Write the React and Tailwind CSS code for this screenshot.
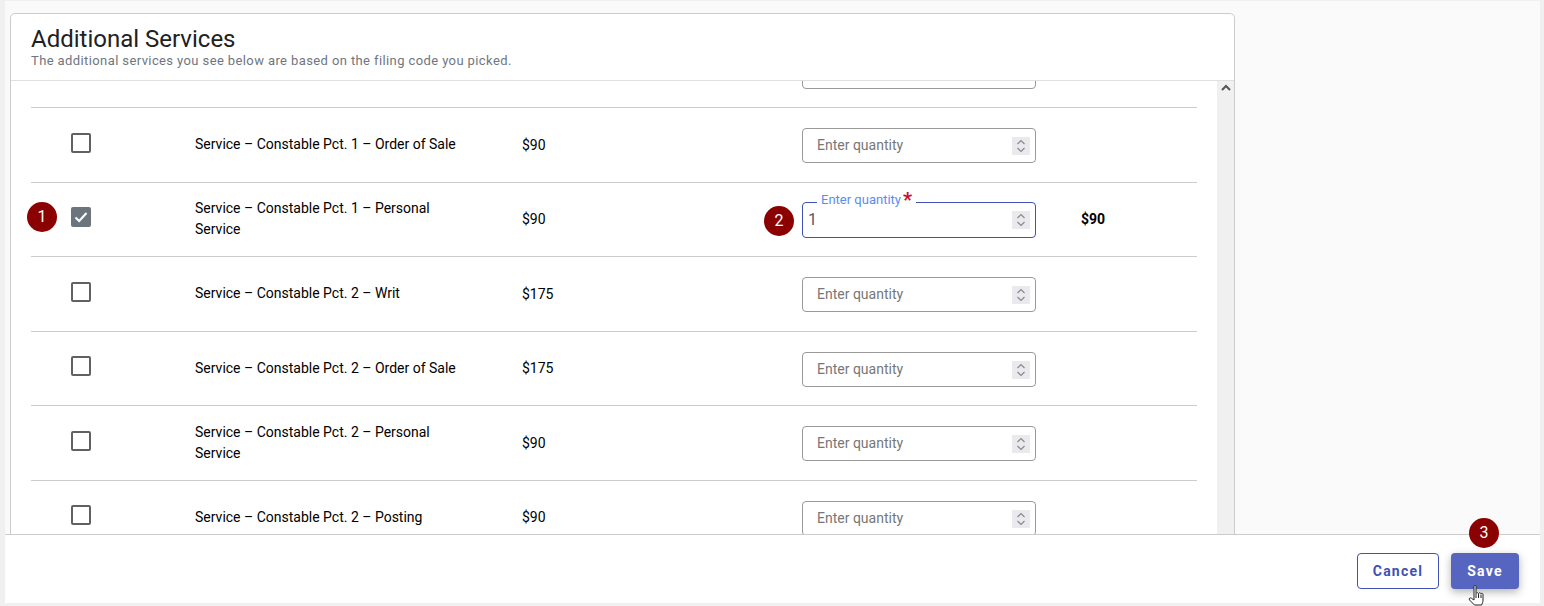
const services = [
  { name: "", price: "", clipped: true },
  { name: "Service – Constable Pct. 1 – Order of Sale", price: "$90" },
  { name: "Service – Constable Pct. 1 – Personal Service", price: "$90", active: true, total: "$90" },
  { name: "Service – Constable Pct. 2 – Writ", price: "$175" },
  { name: "Service – Constable Pct. 2 – Order of Sale", price: "$175" },
  { name: "Service – Constable Pct. 2 – Personal Service", price: "$90" },
  { name: "Service – Constable Pct. 2 – Posting", price: "$90" },
];

const Badge = ({ children, className }) => (
  <div
    className={`absolute w-[30px] h-[30px] rounded-full bg-[#8b0000] text-white text-[16px] flex items-center justify-center ${className}`}
  >
    {children}
  </div>
);

const Spinner = () => (
  <div className="absolute right-[5px] top-[8px] w-[18px] h-[18px] bg-[#e9e9ee] flex items-center justify-center">
    <svg width="12" height="16" viewBox="0 0 12 16" fill="none" stroke="#8a8a8a" strokeWidth="1.2">
      <path d="M2.5 6L6 2.5L9.5 6" />
      <path d="M2.5 10L6 13.5L9.5 10" />
    </svg>
  </div>
);

const QuantityInput = ({ active, clipped }) => {
  if (active) {
    return (
      <div className="relative w-[234px] h-[36px] rounded-[4px] border border-[#3f51b5] bg-white flex items-center pl-[5px] text-[16px] text-[#505b68]">
        <span className="absolute left-[14px] -top-[11px] bg-white px-[4px] text-[13px] leading-[16px] text-[#5b8def] flex">
          Enter quantity
          <span className="text-[#c8102e] text-[20px] font-bold leading-[16px] ml-[2px]">*</span>
        </span>
        1
        <Spinner />
      </div>
    );
  }
  return (
    <div className="relative w-[234px] h-[35px] rounded-[4px] border border-[#999] bg-white flex items-center pl-[14px] text-[14px] text-[#777]">
      {!clipped && "Enter quantity"}
      <Spinner />
    </div>
  );
};

const Checkbox = ({ checked }) =>
  checked ? (
    <div className="w-[20px] h-[20px] rounded-[2px] bg-[#6c757d] flex items-center justify-center">
      <svg width="14" height="14" viewBox="0 0 14 14" fill="none" stroke="#fff" strokeWidth="2">
        <path d="M1.5 7.5L5.2 11L12.5 3" />
      </svg>
    </div>
  ) : (
    <div className="w-[20px] h-[20px] rounded-[2px] border-2 border-[#616161] bg-white" />
  );

const Row = ({ item }) => (
  <div className="relative grid grid-cols-[164px_327px_280px_279px_1fr] items-center h-[74.5px] border-b border-[#ccc] text-[14px] text-black">
    <div className="pl-[40px] -mt-[4px]">
      {!item.clipped && <Checkbox checked={item.active} />}
    </div>
    <div className="w-[270px] leading-[21px]">{item.name}</div>
    <div className="mt-[1px]">{item.price}</div>
    <div className={item.active ? "mt-[1px]" : "mt-[1.5px]"}>
      <QuantityInput active={item.active} clipped={item.clipped} />
    </div>
    <div className="font-bold">{item.total}</div>
    {item.active && <Badge className="-left-[4px] top-[19px]">1</Badge>}
    {item.active && <Badge className="left-[733px] top-[23px]">2</Badge>}
  </div>
);

const HandCursor = () => (
  <svg className="absolute z-20 left-[1466px] top-[583px]" width="20" height="24" viewBox="0 0 20 24" fill="#fff" stroke="#222" strokeWidth="1">
    <path d="M8 3.5C8 2 10 2 10 3.5V10.5C10.5 9.5 12 9.5 12.5 10.5C13 9.5 14.5 9.5 15 10.8C15.5 10 17 10.3 17 11.5V17C17 19 16.3 20.5 15.5 22H8.5L3.5 17C2.5 15.5 4 14.3 5.5 15.3L8 17Z" />
    <path d="M10 11V15M12.5 11V15M15 11.5V15" />
  </svg>
);

export default function App() {
  return (
    <div
      className="relative h-[606px] bg-[#f0f0f0] pt-[1px] pl-[5px] pr-[4px] pb-[3px] overflow-hidden"
      style={{ fontFamily: "Roboto, sans-serif" }}
    >
      <div className="h-full bg-[#fafafa] flex flex-col">
        <main className="flex-1 min-h-0 overflow-hidden pl-[5px] pt-[12px]">
          <div className="w-[1225px] h-[560px] bg-white border border-[#ccc] rounded-t-[5px] flex flex-col">
            <header className="h-[67px] shrink-0 border-b border-[#e0e0e0] pl-[20px] pt-[10px]">
              <h1 className="text-[24px] leading-[30px] text-[#212121]">Additional Services</h1>
              <p className="text-[13px] leading-[14px] tracking-[0.395px] text-[#6f7680]">
                The additional services you see below are based on the filing code you picked.
              </p>
            </header>
            <div className="flex-1 min-h-0 flex">
              <div className="flex-1 overflow-hidden pl-[20px] pr-[20px]">
                <div className="-mt-[47.5px]">
                  {services.map((item, i) => (
                    <Row key={i} item={item} />
                  ))}
                </div>
              </div>
              <div className="w-[17px] bg-[#f0f0f0] flex justify-center pt-[3px]">
                <svg width="10" height="8" viewBox="0 0 10 8" fill="none" stroke="#555" strokeWidth="2">
                  <path d="M1 6L5 2L9 6" />
                </svg>
              </div>
            </div>
          </div>
        </main>
        <footer className="h-[69px] shrink-0 relative z-10 bg-white border-t border-[#ccc] flex justify-end items-start gap-[12px] pt-[18px] pr-[21px]">
          <button className="w-[82px] h-[36px] rounded-[4px] border border-[#3f51b5] bg-white text-[#3f51b5] text-[14px] font-bold tracking-[1.25px]">
            Cancel
          </button>
          <button className="w-[68px] h-[36px] rounded-[4px] bg-[#5565c0] text-white text-[14px] font-bold tracking-[1.25px] shadow-[0_3px_8px_rgba(0,0,0,0.3)]">
            Save
          </button>
        </footer>
      </div>
      <Badge className="left-[1469px] top-[518px] z-20">3</Badge>
      <HandCursor />
    </div>
  );
}
